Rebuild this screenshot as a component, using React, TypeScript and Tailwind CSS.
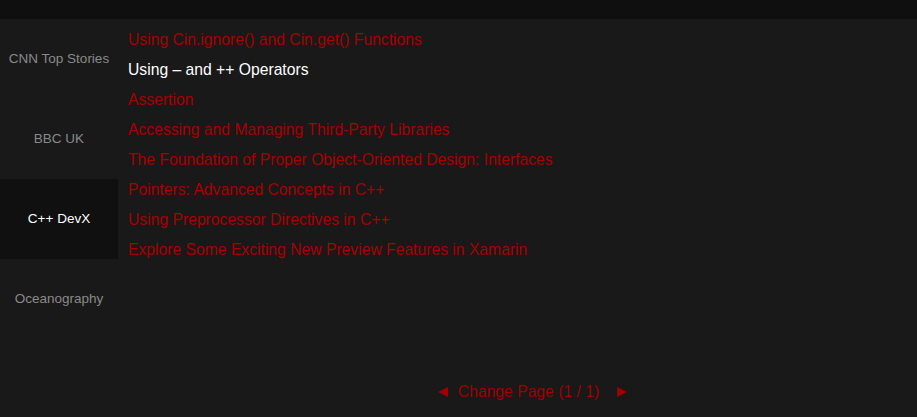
import React, { useState } from 'react';

const FEEDS = ['CNN Top Stories', 'BBC UK', 'C++ DevX', 'Oceanography'];

const ARTICLES = [
  'Using Cin.ignore() and Cin.get() Functions',
  'Using \u2013 and ++ Operators',
  'Assertion',
  'Accessing and Managing Third-Party Libraries',
  'The Foundation of Proper Object-Oriented Design: Interfaces',
  'Pointers: Advanced Concepts in C++',
  'Using Preprocessor Directives in C++',
  'Explore Some Exciting New Preview Features in Xamarin',
];

export default function App() {
  const [feed, setFeed] = useState(2);
  const [article, setArticle] = useState(1);

  return (
    <div className="w-[917px] h-[417px] bg-[#191919] flex flex-col overflow-hidden font-['Liberation_Sans',Arial,sans-serif]">
      <div className="h-[19px] bg-[#0f0f0f] shrink-0" />
      <div className="flex flex-1 min-h-0">
        {/* Feed list */}
        <div className="w-[118px] shrink-0 flex flex-col">
          {FEEDS.map((f, i) => (
            <button
              key={f}
              type="button"
              onClick={() => setFeed(i)}
              className={`h-[80px] flex items-center justify-center text-[13.5px] ${
                feed === i ? 'bg-[#101010] text-white' : 'text-[#8a8a8a]'
              }`}
            >
              {f}
            </button>
          ))}
        </div>

        {/* Articles */}
        <div className="flex-1 flex flex-col pl-[10px] pt-[6px]">
          <div className="flex flex-col flex-1">
            {ARTICLES.map((a, i) => (
              <button
                key={a}
                type="button"
                onClick={() => setArticle(i)}
                className={`h-[30px] text-left text-[15.7px] ${
                  article === i ? 'text-white' : 'text-[#a80000]'
                }`}
              >
                {a}
              </button>
            ))}
          </div>
          <div className="h-[43px] flex items-start justify-center pl-[20px] pt-[6px] text-[#a00000]">
            <div className="flex items-center">
              <svg width="10" height="10" viewBox="0 0 10 10" className="fill-current">
                <path d="M0 5 L10 0 L10 10 Z" />
              </svg>
              <span className="ml-[10px] text-[15.7px]">Change Page (1 / 1)</span>
              <svg width="10" height="10" viewBox="0 0 10 10" className="ml-[18px] fill-current">
                <path d="M10 5 L0 0 L0 10 Z" />
              </svg>
            </div>
          </div>
        </div>
      </div>
    </div>
  );
}
